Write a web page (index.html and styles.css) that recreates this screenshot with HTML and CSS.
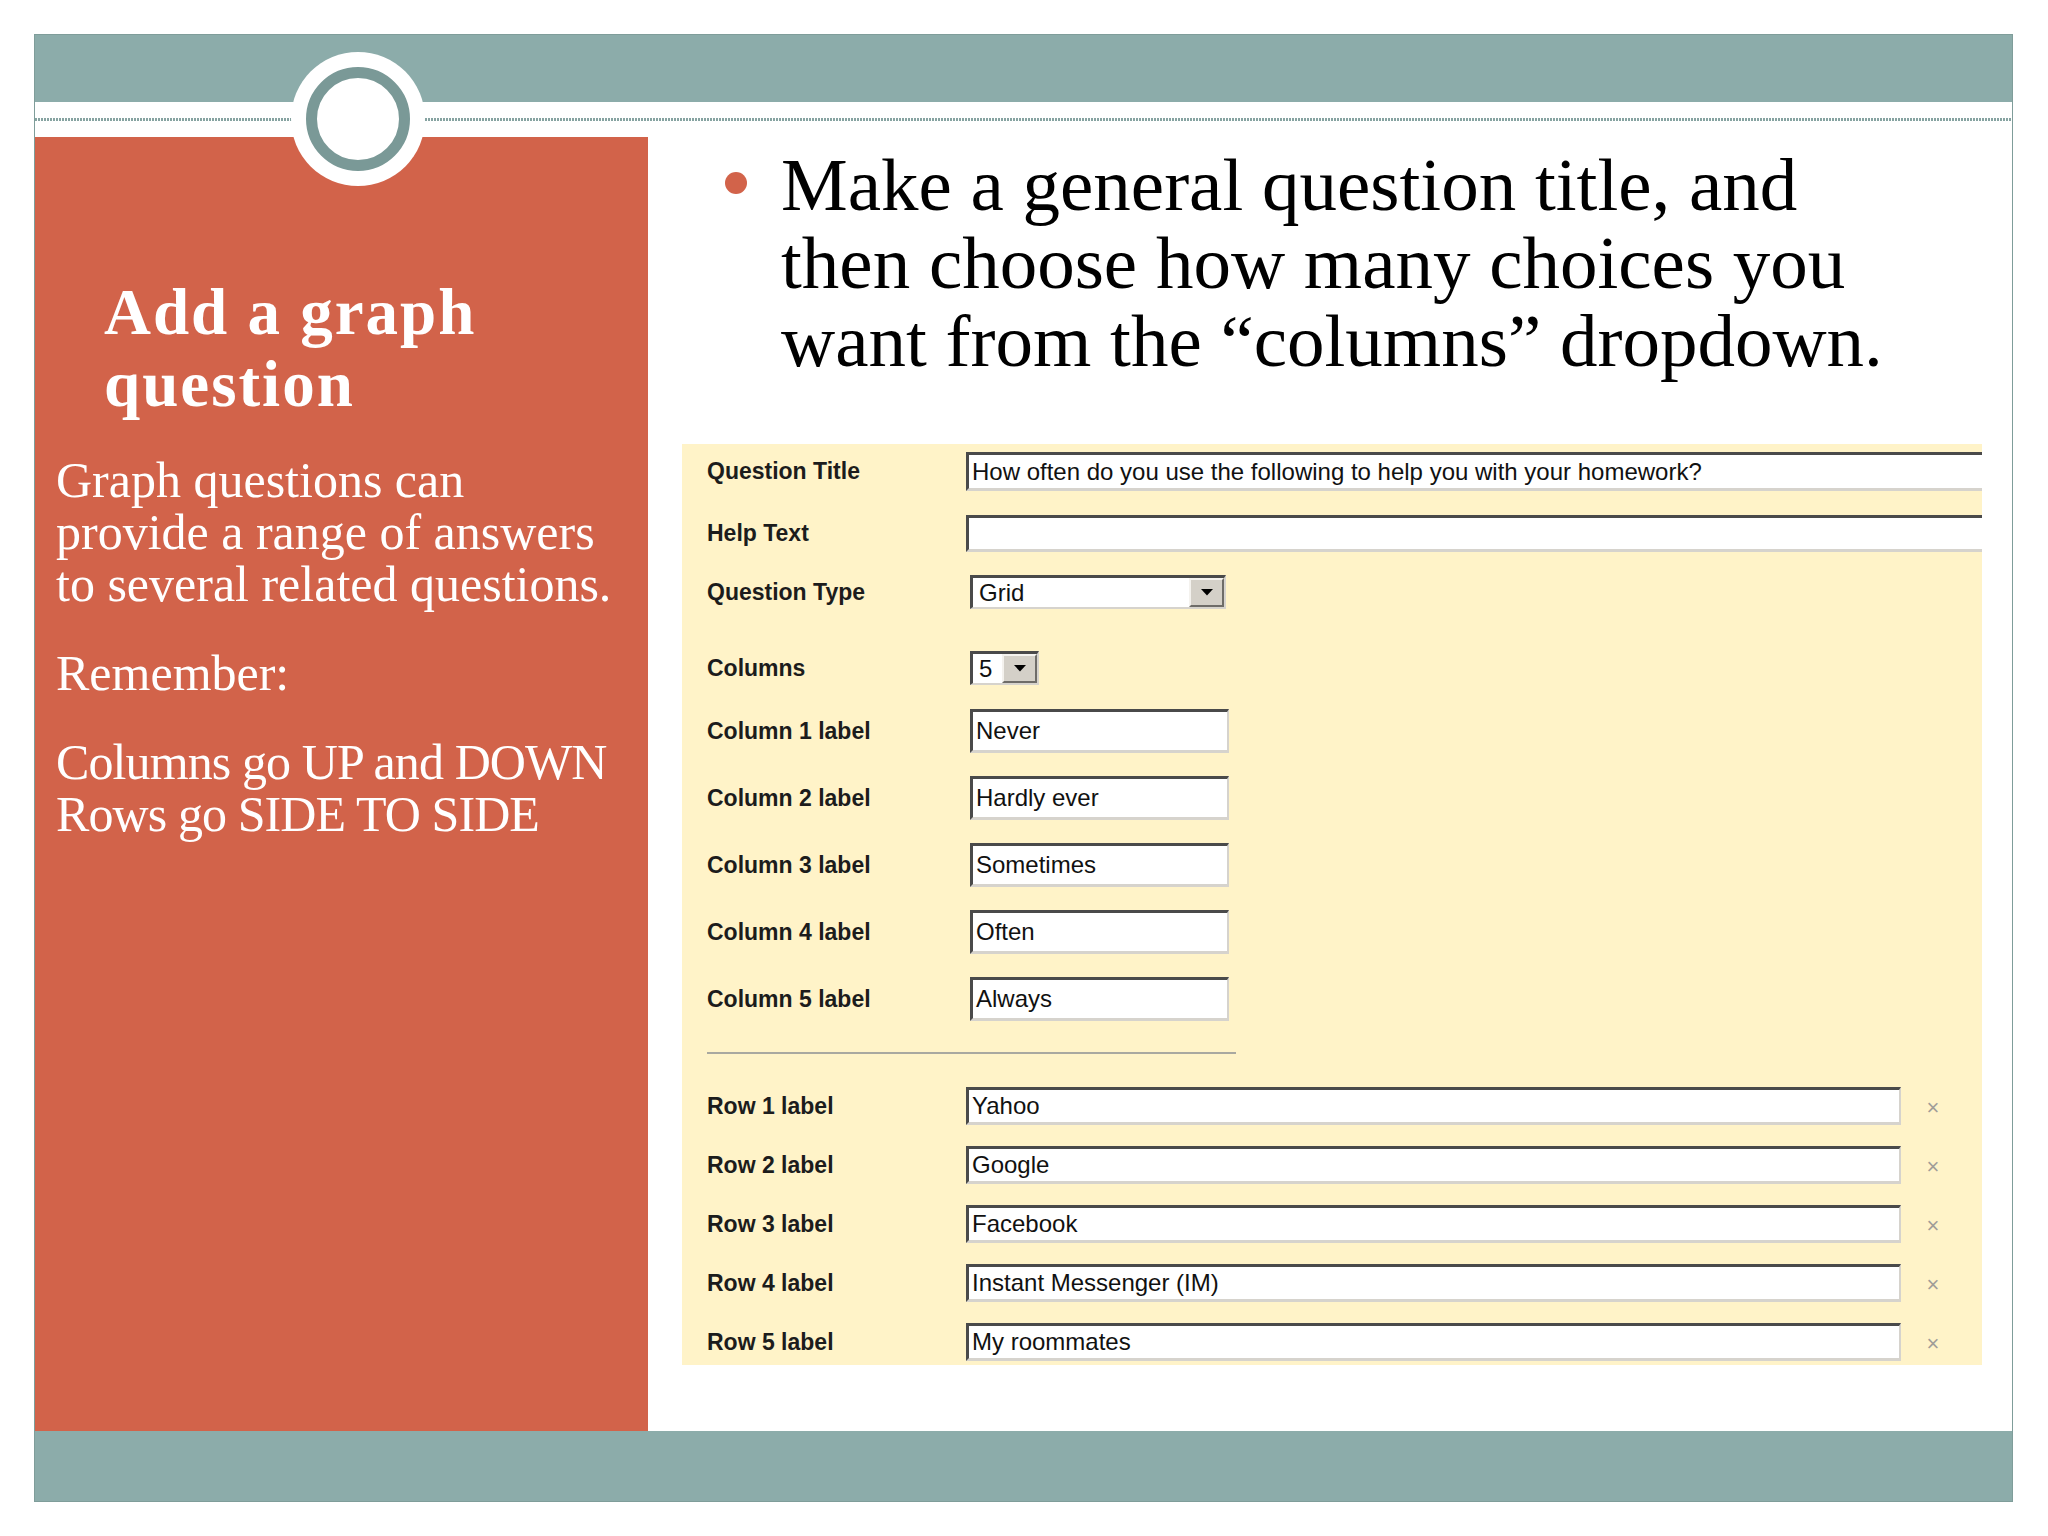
FILE: index.html
```html
<!DOCTYPE html>
<html>
<head>
<meta charset="utf-8">
<title>Add a graph question</title>
<link rel="stylesheet" href="styles.css">
</head>
<body>
<div class="slide">
  <div class="band-top"></div>
  <div class="strip"><div class="dots"></div></div>
  <div class="main">
    <aside class="side">
      <h1 class="side-title">Add a graph<br>question</h1>
      <p class="side-text">Graph questions can<br>provide a range of answers<br>to several related questions.</p>
      <p class="side-text">Remember:</p>
      <p class="side-text side-caps">Columns go UP and DOWN<br>Rows go SIDE TO SIDE</p>
    </aside>
    <section class="content">
      <div class="bullet-row">
        <span class="bullet"></span>
        <p class="bullet-text">Make a general question title, and<br>then choose how many choices you<br>want from the “columns” dropdown.</p>
      </div>
      <div class="form">
        <div class="frow r-title"><span class="flabel">Question Title</span><div class="field field-wide">How often do you use the following to help you with your homework?</div></div>
        <div class="frow r-help"><span class="flabel">Help Text</span><div class="field field-wide"></div></div>
        <div class="frow r-type"><span class="flabel">Question Type</span>
          <div class="select select-type"><span class="select-val">Grid</span><span class="select-btn"><svg width="12" height="7" viewBox="0 0 12 7"><path d="M0 0H12L6 6.5Z" fill="#000"/></svg></span></div>
        </div>
        <div class="frow r-cols"><span class="flabel">Columns</span>
          <div class="select select-cols"><span class="select-val">5</span><span class="select-btn"><svg width="12" height="7" viewBox="0 0 12 7"><path d="M0 0H12L6 6.5Z" fill="#000"/></svg></span></div>
        </div>
        <div class="frow r-col r-col1"><span class="flabel">Column 1 label</span><div class="field field-col">Never</div></div>
        <div class="frow r-col"><span class="flabel">Column 2 label</span><div class="field field-col">Hardly ever</div></div>
        <div class="frow r-col"><span class="flabel">Column 3 label</span><div class="field field-col">Sometimes</div></div>
        <div class="frow r-col"><span class="flabel">Column 4 label</span><div class="field field-col">Often</div></div>
        <div class="frow r-col"><span class="flabel">Column 5 label</span><div class="field field-col">Always</div></div>
        <div class="sep"></div>
        <div class="frow r-row r-row1"><span class="flabel">Row 1 label</span><div class="field field-row">Yahoo</div><span class="remove">×</span></div>
        <div class="frow r-row"><span class="flabel">Row 2 label</span><div class="field field-row">Google</div><span class="remove">×</span></div>
        <div class="frow r-row"><span class="flabel">Row 3 label</span><div class="field field-row">Facebook</div><span class="remove">×</span></div>
        <div class="frow r-row"><span class="flabel">Row 4 label</span><div class="field field-row">Instant Messenger (IM)</div><span class="remove">×</span></div>
        <div class="frow r-row"><span class="flabel">Row 5 label</span><div class="field field-row">My roommates</div><span class="remove">×</span></div>
      </div>
    </section>
  </div>
  <div class="band-bottom"></div>
  <div class="medallion"><div class="ring"></div></div>
</div>
</body>
</html>
```

FILE: styles.css
```css
html, body {
  margin: 0;
  padding: 0;
  background: #ffffff;
}

body {
  width: 2048px;
  height: 1536px;
  overflow: hidden;
}

.slide {
  position: relative;
  box-sizing: border-box;
  margin: 34px 0 0 34px;
  width: 1979px;
  height: 1468px;
  border: 1px solid #7f9d9a;
  background: #ffffff;
  display: flex;
  flex-direction: column;
}

.band-top {
  height: 67px;
  flex: none;
  background: #8cacaa;
}

.strip {
  height: 35px;
  flex: none;
  display: flex;
  flex-direction: column;
  justify-content: center;
}

.dots {
  height: 3px;
  background: repeating-linear-gradient(to right, #86a3a1 0 2px, transparent 2px 3px);
}

.main {
  height: 1294px;
  flex: none;
  display: flex;
}

.band-bottom {
  height: 70px;
  flex: none;
  background: #8cacaa;
}

.side {
  width: 613px;
  flex: none;
  background: #d2634a;
  color: #ffffff;
  font-family: "Liberation Serif", "Times New Roman", serif;
}

.side-title {
  margin: 139px 0 0 0;
  padding-left: 69px;
  font-size: 65px;
  line-height: 72px;
  letter-spacing: 2px;
  font-weight: bold;
  white-space: nowrap;
}

.side-text {
  margin: 0;
  padding-left: 21px;
  font-size: 50px;
  line-height: 52px;
  white-space: nowrap;
}

.side-caps {
  letter-spacing: -0.9px;
}

.side-title + .side-text {
  margin-top: 34px;
}

.side-text + .side-text {
  margin-top: 37px;
}

.content {
  flex: 1;
  min-width: 0;
}

.bullet-row {
  display: flex;
  margin-top: 9px;
}

.bullet {
  flex: none;
  width: 22px;
  height: 22px;
  border-radius: 50%;
  background: #d2634a;
  margin: 26px 0 0 77px;
}

.bullet-text {
  margin: 0 0 0 34px;
  font-family: "Liberation Serif", "Times New Roman", serif;
  font-size: 75px;
  line-height: 78px;
  color: #000000;
  white-space: nowrap;
}

.form {
  box-sizing: border-box;
  margin: 64px 0 0 34px;
  width: 1300px;
  height: 921px;
  padding: 8px 0 0 25px;
  background: #fff3c8;
  overflow: hidden;
  font-family: "Liberation Sans", Arial, sans-serif;
}

.frow {
  display: flex;
  align-items: center;
}

.flabel {
  flex: none;
  width: 259px;
  font-size: 23px;
  font-weight: bold;
  color: #1c1c1c;
  white-space: nowrap;
}

.field {
  flex: none;
  box-sizing: border-box;
  height: 100%;
  display: flex;
  align-items: center;
  padding: 0 3px;
  background: #ffffff;
  border-style: solid;
  border-width: 3px 2px 3px 3px;
  border-color: #4a4a4a #d6d3cd #d6d3cd #4a4a4a;
  font-size: 24px;
  color: #111111;
  white-space: nowrap;
  overflow: hidden;
}

.r-title { height: 39px; }
.r-help { height: 37px; margin-top: 24px; }
.r-type { height: 34px; margin-top: 23px; }
.r-cols { height: 34px; margin-top: 42px; }
.r-col { height: 44px; margin-top: 23px; }
.r-col1 { margin-top: 24px; }
.r-row { height: 38px; margin-top: 21px; }
.r-row1 { margin-top: 33px; }

.field-wide { width: 1100px; }
.field-col { width: 259px; margin-left: 4px; }
.field-row { width: 935px; }

.select {
  flex: none;
  box-sizing: border-box;
  height: 100%;
  margin-left: 4px;
  display: flex;
  background: #ffffff;
  border-style: solid;
  border-width: 3px 2px 2px 3px;
  border-color: #4a4a4a #d6d3cd #d6d3cd #4a4a4a;
}

.select-type { width: 256px; }
.select-cols { width: 69px; }

.select-val {
  flex: 1;
  display: flex;
  align-items: center;
  padding-left: 6px;
  font-size: 24px;
  color: #111111;
}

.select-btn {
  flex: none;
  box-sizing: border-box;
  width: 35px;
  display: flex;
  align-items: center;
  justify-content: center;
  background: #d4d0c8;
  border-style: solid;
  border-width: 2px;
  border-color: #f4f2ee #6e6c68 #6e6c68 #f4f2ee;
}

.sep {
  margin-top: 31px;
  width: 529px;
  height: 2px;
  background: #a9a8a0;
}

.remove {
  flex: none;
  width: 20px;
  margin-left: 22px;
  padding-top: 4px;
  text-align: center;
  font-size: 22px;
  color: #a09d98;
}

.medallion {
  position: absolute;
  left: 256px;
  top: 17px;
  width: 134px;
  height: 134px;
  border-radius: 50%;
  background: #ffffff;
  display: flex;
  align-items: center;
  justify-content: center;
}

.ring {
  box-sizing: border-box;
  width: 104px;
  height: 104px;
  border-radius: 50%;
  border: 11px solid #7a9997;
  background: #ffffff;
}
```
